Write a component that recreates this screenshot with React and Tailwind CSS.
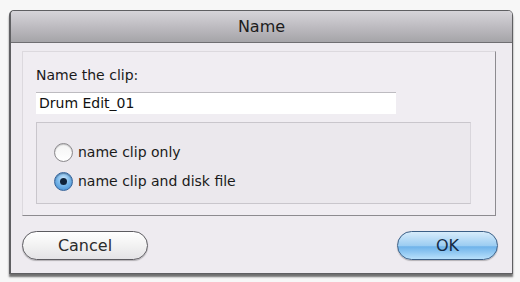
import React from 'react';

function Radio({ checked, label }) {
    return (
        <label className="flex items-center gap-[5px] h-[20px]">
            {checked ? (
                <span className="w-[19px] h-[19px] rounded-full border border-[#35639a] bg-[radial-gradient(circle_at_50%_35%,#cfe8fb_0%,#7ab8ea_45%,#3a86cf_100%)] flex items-center justify-center shadow-[inset_0_1px_1px_rgba(0,0,0,0.3)]">
                    <span className="w-[7px] h-[7px] rounded-full bg-[#10233a]" />
                </span>
            ) : (
                <span className="w-[19px] h-[19px] rounded-full border border-[#8a888c] bg-[linear-gradient(#f4f4f4,#ffffff)] shadow-[inset_0_1px_1px_rgba(0,0,0,0.2)]" />
            )}
            <span className="text-[14px] text-[#1a1a1a]">{label}</span>
        </label>
    );
}

export default function App() {
    return (
        <div className="w-[520px] h-[282px] bg-[#f7f7f7] pt-[10px] pl-[9px] font-['DejaVu_Sans',sans-serif]">
            <div className="w-[504px] h-[264px] flex flex-col border border-[#5f5f62] border-l-2 rounded-t-[5px] shadow-[0_3px_2px_rgba(0,0,0,0.55)] overflow-hidden">
                {/* Title bar */}
                <div className="h-[32px] flex items-center justify-center bg-[linear-gradient(#d6d4d9,#b9b7bc_60%,#a5a4a8)] border-b border-[#6f6e72] text-[16px] text-[#1c1c1c]">
                    Name
                </div>

                {/* Body */}
                <div className="flex-1 bg-[#eeebf0] pl-[11px] pr-[12px] pt-[8px] flex flex-col">
                    <div className="h-[165px] mr-[4px] border border-[#dcd9de] border-r-[#8d8b90] border-b-[#8d8b90] bg-[#f0edf2] pl-[13px] pr-[24px] pt-[14px] flex flex-col">
                        <div className="text-[14px] text-[#1a1a1a] leading-[18px]">Name the clip:</div>
                        <div className="mt-[8px] w-[360px] h-[22px] bg-white border-t border-[#bdbbc0] flex items-center pl-[3px] text-[14px] text-[#111]">
                            Drum Edit_01
                        </div>
                        <div className="mt-[8px] h-[82px] border border-[#c9c6cc] border-r-[#d9d6dc] bg-[#ebe8ed] pl-[17px] pt-[19px] flex flex-col gap-[9px]">
                            <Radio label="name clip only" />
                            <Radio checked label="name clip and disk file" />
                        </div>
                    </div>

                    {/* Buttons */}
                    <div className="mt-[15px] mr-[2px] flex justify-between">
                        <button className="w-[126px] h-[29px] rounded-full border border-[#5c5b60] bg-[linear-gradient(#ffffff,#f2f2f2_50%,#e4e3e6)] text-[16px] text-[#2b2b2b] shadow-[0_1px_1px_rgba(0,0,0,0.25)]">
                            Cancel
                        </button>
                        <button className="w-[101px] h-[29px] rounded-full border border-[#3b5f86] bg-[linear-gradient(#d7ecfb,#9ccdf2_50%,#6fb3ea_55%,#b8e0fb)] text-[16px] text-[#142b45] shadow-[0_1px_1px_rgba(0,0,0,0.25)]">
                            OK
                        </button>
                    </div>
                </div>
            </div>
        </div>
    );
}
